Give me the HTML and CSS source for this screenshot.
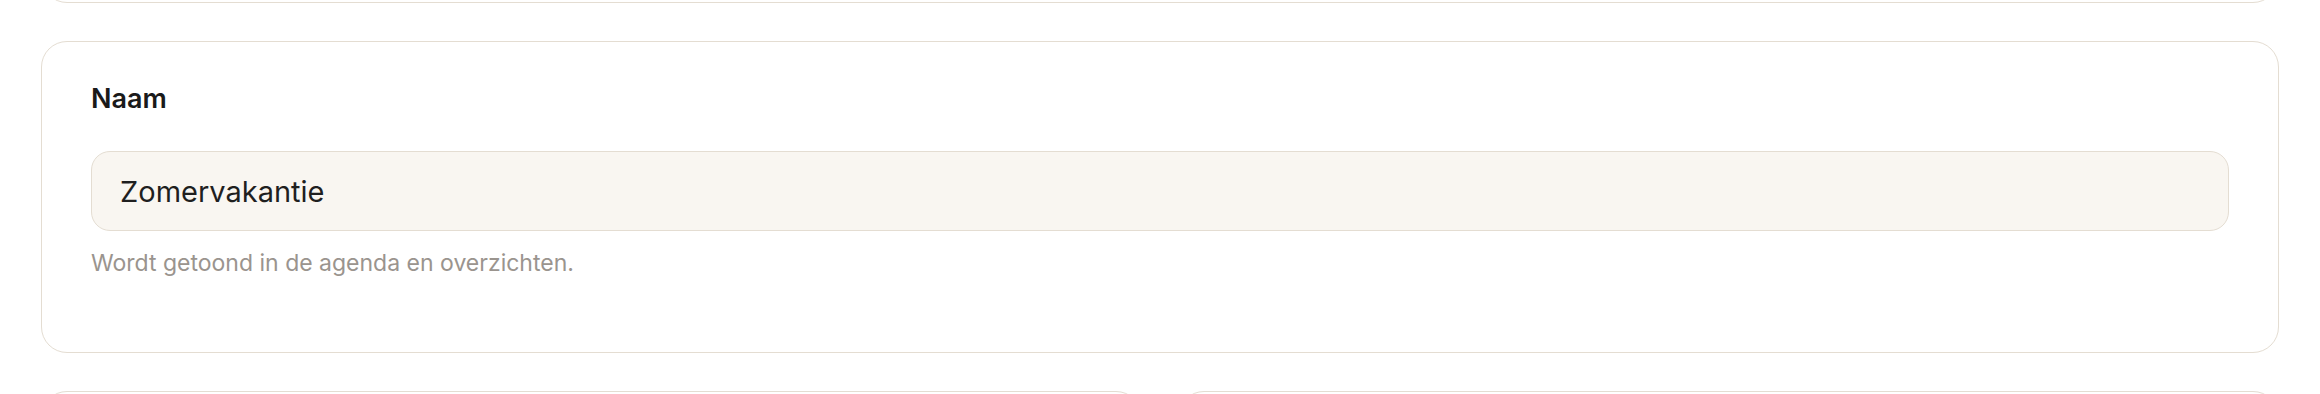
FILE: index.html
```html
<!DOCTYPE html>
<html lang="nl">
<head>
  <meta charset="UTF-8" />
  <meta name="viewport" content="width=device-width, initial-scale=1.0"/>
  <title>Periode bewerken</title>
  <link rel="stylesheet" href="styles.css">
</head>
<body>
  <div class="pagina">
    <div class="kaart kaart-vorige"></div>

    <div class="kaart">
      <label class="veld-label" for="naam">Naam</label>
      <input class="veld-invoer" id="naam" type="text" value="Zomervakantie">
      <p class="veld-hulp">Wordt getoond in de agenda en overzichten.</p>
    </div>

    <div class="rij">
      <div class="kaart kaart-klein"></div>
      <div class="kaart kaart-klein"></div>
    </div>
  </div>
</body>
</html>
```

FILE: styles.css
```css
* {
  box-sizing: border-box;
}
body {
  margin: 0;
  background: #ffffff;
  font-family: Inter, "Noto Sans", sans-serif;
  color: #1a1a1a;
  overflow: hidden;
}
.pagina {
  display: flex;
  flex-direction: column;
  gap: 38px;
  padding: 0 41px;
}
.kaart {
  background: #ffffff;
  border: 1px solid #e4ddd2;
  border-radius: 26px;
  padding: 41px 49px 73px;
  display: flex;
  flex-direction: column;
}
.kaart-vorige {
  height: 100px;
  margin-top: -97px;
  padding: 0;
}
.veld-label {
  font-size: 27px;
  font-weight: 600;
  line-height: 32px;
  color: #1a1a1a;
  margin-bottom: 36px;
}
.veld-invoer {
  height: 80px;
  width: 100%;
  padding: 0 28px;
  border: 1px solid #e4ddd2;
  border-radius: 19px;
  background: #f9f6f1;
  font-family: inherit;
  font-size: 29px;
  color: #1f1f1f;
  outline: none;
}
.veld-hulp {
  margin: 16px 0 0;
  font-size: 23px;
  line-height: 32px;
  color: #9a948e;
}
.rij {
  display: grid;
  grid-template-columns: 1fr 1fr;
  gap: 36px;
}
.kaart-klein {
  height: 200px;
  padding: 0;
}
```
